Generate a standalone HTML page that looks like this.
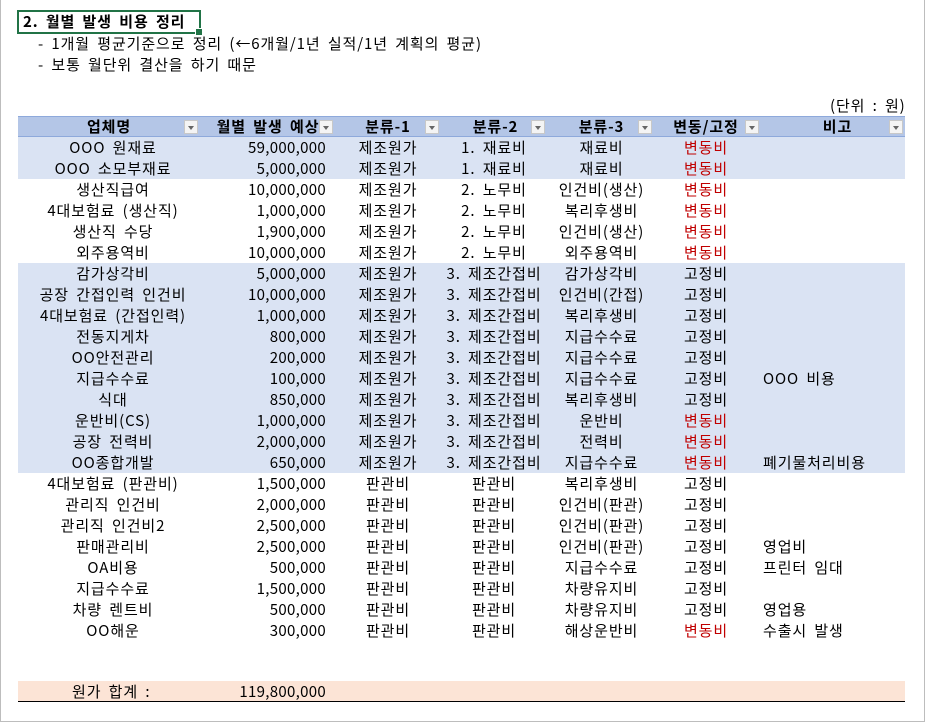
<!DOCTYPE html>
<html><head><meta charset="utf-8"><style>
*{margin:0;padding:0;box-sizing:border-box}
body{width:925px;height:722px;background:#fff;position:relative;overflow:hidden;font-family:"Noto Sans CJK KR","Liberation Sans",sans-serif;font-size:15px;color:#000;letter-spacing:0.9px;word-spacing:3px}
.frame{position:absolute;left:0;top:0;width:925px;height:722px;border:1px solid #bdbdbd;border-top:none}
.t{position:absolute;white-space:nowrap;line-height:21px}
.n{letter-spacing:0.3px}
.title{position:absolute;left:17px;top:10px;width:184px;height:24px;border:2px solid #217346;font-weight:bold;padding-left:4px;line-height:20px}
.title:after{content:"";position:absolute;right:-4px;bottom:-4px;width:6px;height:6px;background:#217346;border:1px solid #fff}
.band{position:absolute;left:18px;width:887px;background:#dae3f3}
.hdr{position:absolute;left:18px;top:116px;width:887px;height:21px;background:#b4c6e7;border-top:1px solid #8ea9db;border-bottom:1px solid #8ea9db}
.dd{position:absolute;top:120px;width:14px;height:14px;background:#f4f4f4;border:1px solid #c8c8c8}
.dd:after{content:"";position:absolute;left:3px;top:5px;border-left:3.5px solid transparent;border-right:3.5px solid transparent;border-top:4px solid #666}
.c{text-align:center}.r{text-align:right}
.red{color:#c00000}
</style></head><body>
<div class="frame"></div>
<div class="title">2. 월별 발생 비용 정리</div>
<div class="t" style="left:38px;top:33px">- 1개월 평균기준으로 정리 (←6개월/1년 실적/1년 계획의 평균)</div>
<div class="t" style="left:38px;top:54px">- 보통 월단위 결산을 하기 때문</div>
<div class="t" style="left:830px;top:95px">(단위 : 원)</div>
<div class="band" style="top:137px;height:42px"></div>
<div class="band" style="top:263px;height:210px"></div>
<div class="hdr"></div>
<div class="t c" style="left:18px;width:182px;top:116px;font-weight:bold">업체명</div>
<div class="t c" style="left:203px;width:130px;top:116px;font-weight:bold">월별 발생 예상</div>
<div class="t c" style="left:333px;width:110px;top:116px;font-weight:bold">분류-1</div>
<div class="t c" style="left:443px;width:105px;top:116px;font-weight:bold">분류-2</div>
<div class="t c" style="left:548px;width:107px;top:116px;font-weight:bold">분류-3</div>
<div class="t c" style="left:655px;width:102px;top:116px;font-weight:bold">변동/고정</div>
<div class="t c" style="left:760px;width:155px;top:116px;font-weight:bold">비고</div>
<div class="dd" style="left:184px"></div><div class="dd" style="left:319px"></div><div class="dd" style="left:425px"></div><div class="dd" style="left:531px"></div><div class="dd" style="left:638px"></div><div class="dd" style="left:745px"></div><div class="dd" style="left:889px"></div>
<div id="rows"></div>
<div style="position:absolute;left:18px;top:681px;width:887px;height:21px;background:#fce4d6;border-bottom:1.5px solid #000"></div>
<div class="t" style="left:72px;top:681px">원가 합계 :</div>
<div class="t r n" style="left:200px;width:126px;top:681px">119,800,000</div>
<script>
var d=[
["OOO 원재료","59,000,000","제조원가","1. 재료비","재료비",1,""],
["OOO 소모부재료","5,000,000","제조원가","1. 재료비","재료비",1,""],
["생산직급여","10,000,000","제조원가","2. 노무비","인건비(생산)",1,""],
["4대보험료 (생산직)","1,000,000","제조원가","2. 노무비","복리후생비",1,""],
["생산직 수당","1,900,000","제조원가","2. 노무비","인건비(생산)",1,""],
["외주용역비","10,000,000","제조원가","2. 노무비","외주용역비",1,""],
["감가상각비","5,000,000","제조원가","3. 제조간접비","감가상각비",0,""],
["공장 간접인력 인건비","10,000,000","제조원가","3. 제조간접비","인건비(간접)",0,""],
["4대보험료 (간접인력)","1,000,000","제조원가","3. 제조간접비","복리후생비",0,""],
["전동지게차","800,000","제조원가","3. 제조간접비","지급수수료",0,""],
["OO안전관리","200,000","제조원가","3. 제조간접비","지급수수료",0,""],
["지급수수료","100,000","제조원가","3. 제조간접비","지급수수료",0,"OOO 비용"],
["식대","850,000","제조원가","3. 제조간접비","복리후생비",0,""],
["운반비(CS)","1,000,000","제조원가","3. 제조간접비","운반비",1,""],
["공장 전력비","2,000,000","제조원가","3. 제조간접비","전력비",1,""],
["OO종합개발","650,000","제조원가","3. 제조간접비","지급수수료",1,"폐기물처리비용"],
["4대보험료 (판관비)","1,500,000","판관비","판관비","복리후생비",0,""],
["관리직 인건비","2,000,000","판관비","판관비","인건비(판관)",0,""],
["관리직 인건비2","2,500,000","판관비","판관비","인건비(판관)",0,""],
["판매관리비","2,500,000","판관비","판관비","인건비(판관)",0,"영업비"],
["OA비용","500,000","판관비","판관비","지급수수료",0,"프린터 임대"],
["지급수수료","1,500,000","판관비","판관비","차량유지비",0,""],
["차량 렌트비","500,000","판관비","판관비","차량유지비",0,"영업용"],
["OO해운","300,000","판관비","판관비","해상운반비",1,"수출시 발생"]];
var h="";
d.forEach(function(r,i){var y=137+i*21;
h+='<div class="t c" style="left:18px;width:190px;top:'+y+'px">'+r[0]+'</div>';
h+='<div class="t r n" style="left:200px;width:126px;top:'+y+'px">'+r[1]+'</div>';
h+='<div class="t c" style="left:333px;width:110px;top:'+y+'px">'+r[2]+'</div>';
h+='<div class="t c" style="left:443px;width:102px;top:'+y+'px">'+r[3]+'</div>';
h+='<div class="t c" style="left:548px;width:107px;top:'+y+'px">'+r[4]+'</div>';
h+='<div class="t c'+(r[5]?' red':'')+'" style="left:655px;width:102px;top:'+y+'px">'+(r[5]?'변동비':'고정비')+'</div>';
h+='<div class="t" style="left:763px;top:'+y+'px">'+r[6]+'</div>';});
document.getElementById('rows').innerHTML=h;
</script>
</body></html>
